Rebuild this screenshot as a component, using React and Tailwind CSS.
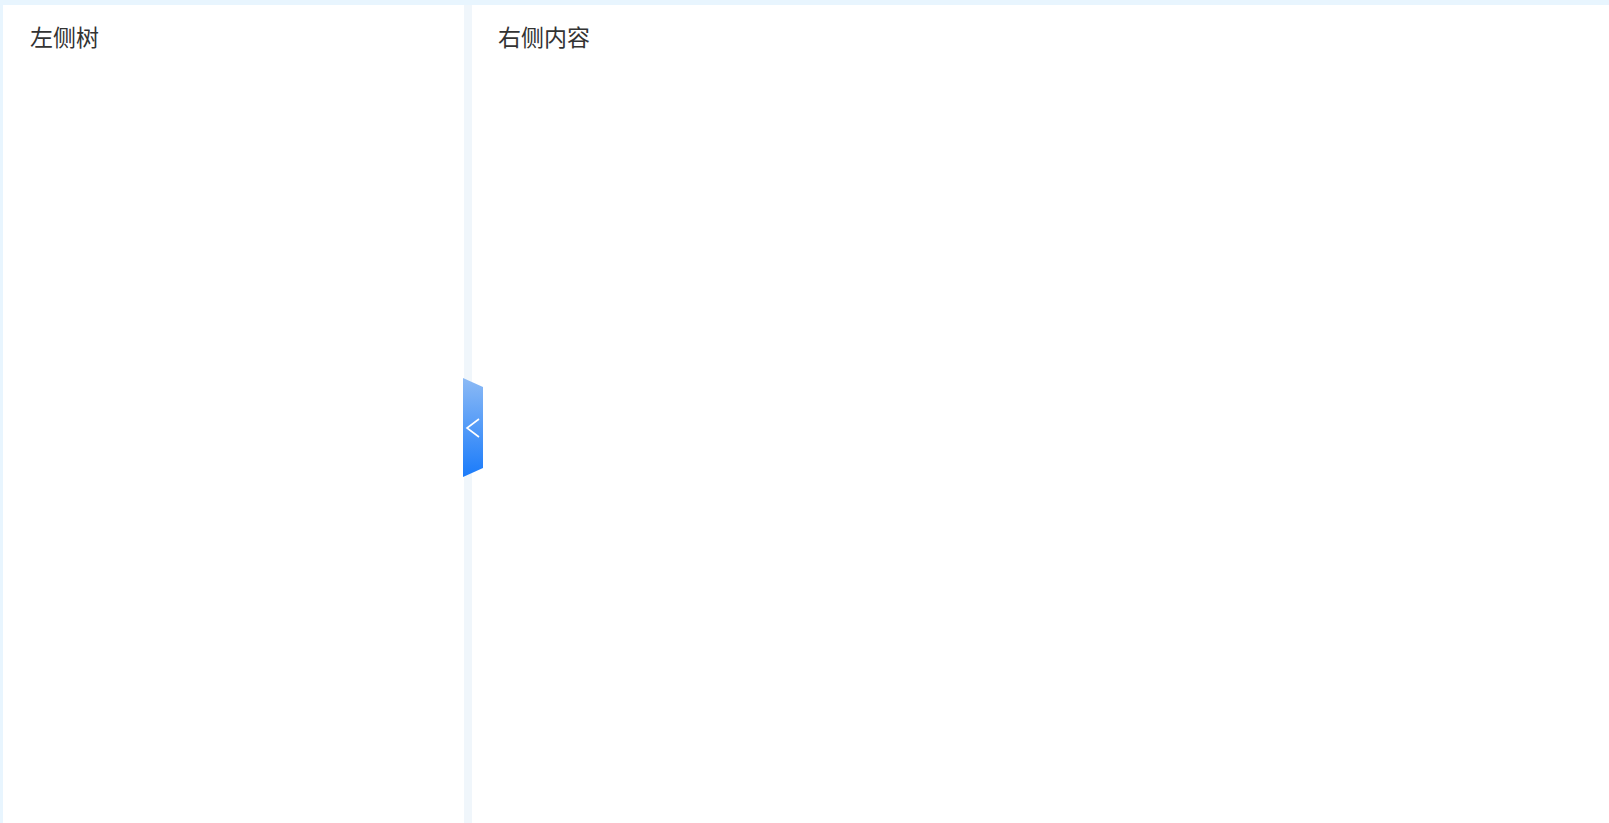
const fontStack = { fontFamily: '"Noto Sans CJK SC", "Noto Sans", sans-serif' };

const CollapseHandle = () => (
  <button className="absolute left-[-1px] top-[373px] w-[20px] h-[100px] p-0 border-0 bg-transparent cursor-pointer">
    <svg width="20" height="100" viewBox="0 0 20 100">
      <defs>
        <linearGradient id="handleGrad" x1="0" y1="0" x2="0" y2="1">
          <stop offset="0%" stopColor="#8cbaf5" />
          <stop offset="100%" stopColor="#1a7bfa" />
        </linearGradient>
      </defs>
      <polygon points="0,0 20,9 20,90 0,99" fill="url(#handleGrad)" />
      <polyline points="16,41 4,50 16,59" fill="none" stroke="#ffffff" strokeWidth="1.6" />
    </svg>
  </button>
);

export default function App() {
  return (
    <div className="h-screen w-full bg-[#e8f5fe] pt-[5px] pl-[3px] flex overflow-hidden" style={fontStack}>
      <aside className="w-[461px] h-full bg-white px-[27px] py-[15px]">
        <h3 className="text-[23px] leading-[32px] text-[#333333]">左侧树</h3>
      </aside>
      <div className="relative w-[8px] h-full bg-[#f0f6fb]">
        <CollapseHandle />
      </div>
      <main className="flex-1 h-full bg-white px-[26px] py-[15px]">
        <h3 className="text-[23px] leading-[32px] text-[#333333]">右侧内容</h3>
      </main>
    </div>
  );
}
